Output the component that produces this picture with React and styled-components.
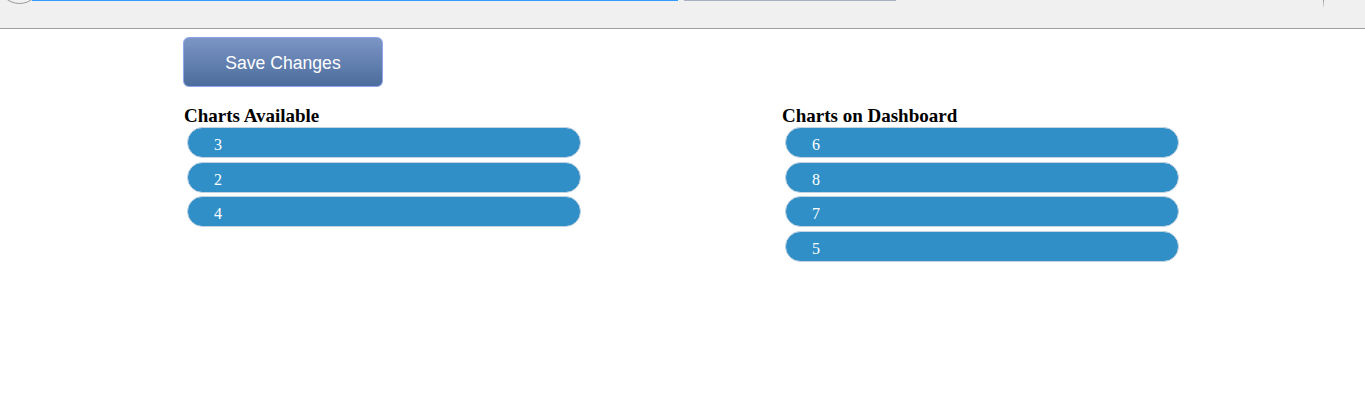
import React from 'react';
import styled, { createGlobalStyle } from 'styled-components';

const GlobalStyle = createGlobalStyle`
    html, body {
        margin: 0;
        padding: 0;
        background: #fff;
        font-family: "Liberation Serif", "Times New Roman", serif;
    }
`

const TopBar = styled.div`
    height: 28px;
    background: #f0f0f0;
    border-bottom: 1px solid #a0a0a0;
    display: flex;
    align-items: flex-start;
    overflow: hidden;
`

const Knob = styled.div`
    flex: none;
    width: 41px;
    height: 41px;
    margin: -39px -9px 0 -2px;
    border: 1px solid #9a9a9a;
    border-radius: 50%;
    background: #f0f0f0;
`

const Track = styled.div`
    flex: none;
    width: ${p => p.width}px;
    height: 1px;
    margin-left: ${p => p.gap || 0}px;
    background: ${p => p.color};
`

const Tick = styled.div`
    flex: none;
    width: 1px;
    height: 7px;
    margin-left: auto;
    margin-right: 41px;
    background: linear-gradient(#9a9a9a, #e0e0e0);
`

const Content = styled.div`
    padding: 8px 0 0 183px;
`

const SaveButton = styled.button`
    display: block;
    width: 200px;
    height: 50px;
    border: 1px solid #8ea6ea;
    border-radius: 6px;
    background: linear-gradient(#7c95c5, #4b6c9c);
    color: #fff;
    font-family: "Liberation Sans", Arial, sans-serif;
    font-size: 17.6px;
    padding: 2px 0 0;
    cursor: pointer;
`

const Columns = styled.div`
    display: grid;
    grid-template-columns: 598px 400px;
    margin: 18px 0 0 1px;
`

const Heading = styled.h3`
    margin: 0 0 1px;
    font-size: 19px;
    font-weight: bold;
    color: #000;
    line-height: 21px;
`

const List = styled.ul`
    list-style: none;
    margin: 0;
    padding: 0 0 0 3px;
    display: flex;
    flex-direction: column;
    gap: 3.5px;
`

const Item = styled.li`
    box-sizing: border-box;
    width: 394px;
    height: 31px;
    padding: 4px 0 0 26px;
    border: 1px solid #c4d3e1;
    border-radius: 16px;
    background: #318fc8;
    color: #fff;
    font-size: 16px;
    line-height: 25px;
`

const available = [3, 2, 4]
const dashboard = [6, 8, 7, 5]

const Section = ({ title, charts }) => (
    <div>
        <Heading>{title}</Heading>
        <List>
            {charts.map((c) => <Item key={c}>{c}</Item>)}
        </List>
    </div>
)

const App = () => {
    return (<>
        <GlobalStyle />
        <TopBar>
            <Knob />
            <Track width={646} color="#3399ff" />
            <Track width={212} gap={6} color="#a9b1c0" />
            <Tick />
        </TopBar>
        <Content>
            <SaveButton>Save Changes</SaveButton>
            <Columns>
                <Section title="Charts Available" charts={available} />
                <Section title="Charts on Dashboard" charts={dashboard} />
            </Columns>
        </Content>
    </>);
}

export default App;
